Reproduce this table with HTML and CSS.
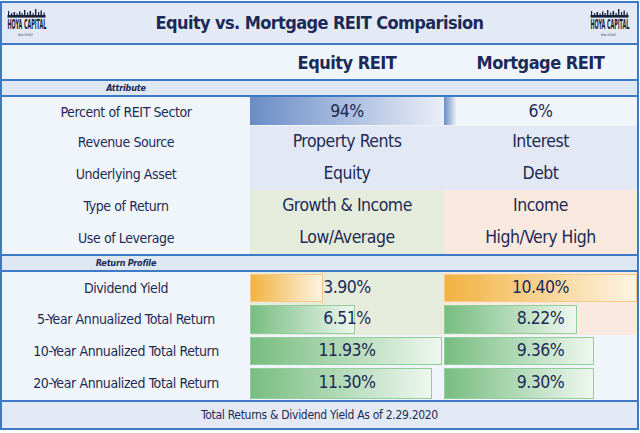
FILE: index.html
```html
<!DOCTYPE html>
<html lang="en">
<head>
<meta charset="utf-8">
<title>Equity vs. Mortgage REIT Comparision</title>
<link rel="stylesheet" href="styles.css">
</head>
<body>
<div class="frame">
  <header class="title-bar">
    <svg class="logo" viewBox="0 0 42 29" width="42" height="29" aria-label="Hoya Capital Real Estate">
      <g fill="#1b2240">
        <rect x="0.5" y="7" width="38" height="2.6"/>
        <rect x="1" y="3" width="1.2" height="5"/>
        <rect x="4" y="5" width="1.2" height="3"/>
        <rect x="6.5" y="4" width="1.6" height="4"/>
        <rect x="9.5" y="5.5" width="1.2" height="2"/>
        <rect x="12" y="3.5" width="1.4" height="4"/>
        <rect x="14.5" y="5" width="1.2" height="3"/>
        <rect x="17" y="2" width="1.4" height="6"/>
        <rect x="20" y="4.5" width="1.2" height="3"/>
        <rect x="22.5" y="3" width="1.6" height="5"/>
        <rect x="25.5" y="5" width="1.2" height="3"/>
        <rect x="28" y="1" width="1.4" height="7"/>
        <rect x="31" y="4" width="1.2" height="4"/>
        <rect x="33.5" y="2.5" width="1.4" height="5.5"/>
        <rect x="36.5" y="4.5" width="1.2" height="3"/>
        <text transform="translate(0.5 21) scale(0.385 1)" font-size="14" font-weight="700" class="logo-text">HOYA CAPITAL</text>
        <text transform="translate(11 28) scale(0.85 1)" font-size="3" class="logo-text">REAL ESTATE</text>
      </g>
    </svg>
    <h1 class="title">Equity vs. Mortgage REIT Comparision</h1>
    <svg class="logo" viewBox="0 0 42 29" width="42" height="29" aria-label="Hoya Capital Real Estate">
      <g fill="#1b2240">
        <rect x="0.5" y="7" width="38" height="2.6"/>
        <rect x="1" y="3" width="1.2" height="5"/>
        <rect x="4" y="5" width="1.2" height="3"/>
        <rect x="6.5" y="4" width="1.6" height="4"/>
        <rect x="9.5" y="5.5" width="1.2" height="2"/>
        <rect x="12" y="3.5" width="1.4" height="4"/>
        <rect x="14.5" y="5" width="1.2" height="3"/>
        <rect x="17" y="2" width="1.4" height="6"/>
        <rect x="20" y="4.5" width="1.2" height="3"/>
        <rect x="22.5" y="3" width="1.6" height="5"/>
        <rect x="25.5" y="5" width="1.2" height="3"/>
        <rect x="28" y="1" width="1.4" height="7"/>
        <rect x="31" y="4" width="1.2" height="4"/>
        <rect x="33.5" y="2.5" width="1.4" height="5.5"/>
        <rect x="36.5" y="4.5" width="1.2" height="3"/>
        <text transform="translate(0.5 21) scale(0.385 1)" font-size="14" font-weight="700" class="logo-text">HOYA CAPITAL</text>
        <text transform="translate(11 28) scale(0.85 1)" font-size="3" class="logo-text">REAL ESTATE</text>
      </g>
    </svg>
  </header>

  <div class="grid head-row">
    <div></div>
    <div class="col-head">Equity REIT</div>
    <div class="col-head">Mortgage REIT</div>
  </div>

  <div class="grid band"><div class="band-label">Attribute</div></div>

  <div class="grid attr-rows">
    <div class="label">Percent of REIT Sector</div>
    <div class="cell plain"><div class="bar bar-blue bar-top" style="width:193px"></div><span class="val">94%</span></div>
    <div class="cell plain"><div class="bar bar-blue bar-top" style="width:12px"></div><span class="val">6%</span></div>

    <div class="label">Revenue Source</div>
    <div class="cell blue"><span class="val">Property Rents</span></div>
    <div class="cell blue"><span class="val">Interest</span></div>

    <div class="label">Underlying Asset</div>
    <div class="cell blue"><span class="val">Equity</span></div>
    <div class="cell blue"><span class="val">Debt</span></div>

    <div class="label">Type of Return</div>
    <div class="cell green"><span class="val">Growth &amp; Income</span></div>
    <div class="cell peach"><span class="val">Income</span></div>

    <div class="label">Use of Leverage</div>
    <div class="cell green"><span class="val">Low/Average</span></div>
    <div class="cell peach"><span class="val">High/Very High</span></div>
  </div>

  <div class="grid band"><div class="band-label">Return Profile</div></div>

  <div class="grid ret-rows">
    <div class="label">Dividend Yield</div>
    <div class="cell green"><div class="bar bar-orange" style="width:73px"></div><span class="val">3.90%</span></div>
    <div class="cell peach"><div class="bar bar-orange" style="width:193px"></div><span class="val">10.40%</span></div>

    <div class="label">5-Year Annualized Total Return</div>
    <div class="cell green"><div class="bar bar-green" style="width:105px"></div><span class="val">6.51%</span></div>
    <div class="cell peach"><div class="bar bar-green" style="width:133px"></div><span class="val">8.22%</span></div>

    <div class="label">10-Year Annualized Total Return</div>
    <div class="cell plain"><div class="bar bar-green" style="width:192px"></div><span class="val">11.93%</span></div>
    <div class="cell plain"><div class="bar bar-green" style="width:150px"></div><span class="val">9.36%</span></div>

    <div class="label">20-Year Annualized Total Return</div>
    <div class="cell plain"><div class="bar bar-green" style="width:182px"></div><span class="val">11.30%</span></div>
    <div class="cell plain"><div class="bar bar-green" style="width:150px"></div><span class="val">9.30%</span></div>
  </div>

  <footer class="foot">Total Returns &amp; Dividend Yield As of 2.29.2020</footer>
</div>
</body>
</html>
```

FILE: styles.css
```css
html, body {
  margin: 0;
  padding: 0;
  background: #ffffff;
}

body {
  font-family: "DejaVu Sans Condensed", "Roboto", sans-serif;
  color: #1d2a56;
}

.frame {
  width: 635px;
  margin-top: 1px;
  border: 2px solid #3d79c5;
  background: #f0f5fb;
}

.title-bar {
  height: 40px;
  display: flex;
  align-items: flex-start;
  justify-content: space-between;
  padding: 0 5px 0 5px;
  background: #e3eaf5;
}

.logo {
  display: block;
  margin-top: 5px;
}

.logo-text {
  font-family: "DejaVu Sans Condensed", "Roboto", sans-serif;
}

.title {
  margin: 0;
  font-size: 18px;
  letter-spacing: -0.6px;
  font-weight: 700;
  line-height: 40px;
  color: #1b2a58;
}

.grid {
  display: grid;
  grid-template-columns: 248px 194px 193px;
  border-top: 2px solid #3d79c5;
}

.head-row {
  height: 34px;
  background: #f0f5fb;
}

.col-head {
  display: flex;
  align-items: center;
  justify-content: center;
  font-size: 18px;
  letter-spacing: -0.5px;
  font-weight: 700;
  color: #1b2a58;
}

.band {
  height: 14px;
  background: #dfe7f3;
}

.band-label {
  display: flex;
  align-items: center;
  justify-content: center;
  font-size: 9px;
  letter-spacing: -0.2px;
  font-weight: 700;
  font-style: italic;
  color: #1b2a58;
}

.attr-rows {
  grid-template-rows: 29px 32px 32px 32px 32px;
}

.ret-rows {
  grid-template-rows: 31px 32px 31px 34px;
}

.label {
  display: flex;
  align-items: center;
  justify-content: center;
  font-size: 14px;
  letter-spacing: -0.4px;
  background: #f0f5fb;
}

.cell {
  display: grid;
}

.cell > * {
  grid-area: 1 / 1;
}

.cell.plain { background: #f0f5fb; }
.cell.blue { background: #e2e9f4; }
.cell.green { background: #e6ecdc; }
.cell.peach { background: #f9e9df; }

.val {
  place-self: center;
  font-size: 17.5px;
  letter-spacing: -0.5px;
  line-height: 1;
}

.bar {
  justify-self: start;
  align-self: stretch;
  box-sizing: border-box;
  margin: 2px 0 1px;
}

.bar-top {
  margin: 0 0 1px;
}

.bar-blue {
  background: linear-gradient(to right, #6a8cc6, #e9eef7);
}

.bar-orange {
  border: 1px solid #f6c985;
  background: linear-gradient(to right, #f2b240, #fdf4e4);
}

.bar-green {
  border: 1px solid #92ce98;
  background: linear-gradient(to right, #77bd80, #eef7ef);
}

.foot {
  height: 26px;
  border-top: 2px solid #3d79c5;
  background: #e3eaf5;
  display: flex;
  align-items: center;
  justify-content: center;
  font-size: 12px;
  letter-spacing: -0.3px;
  color: #1d2a56;
}
```
